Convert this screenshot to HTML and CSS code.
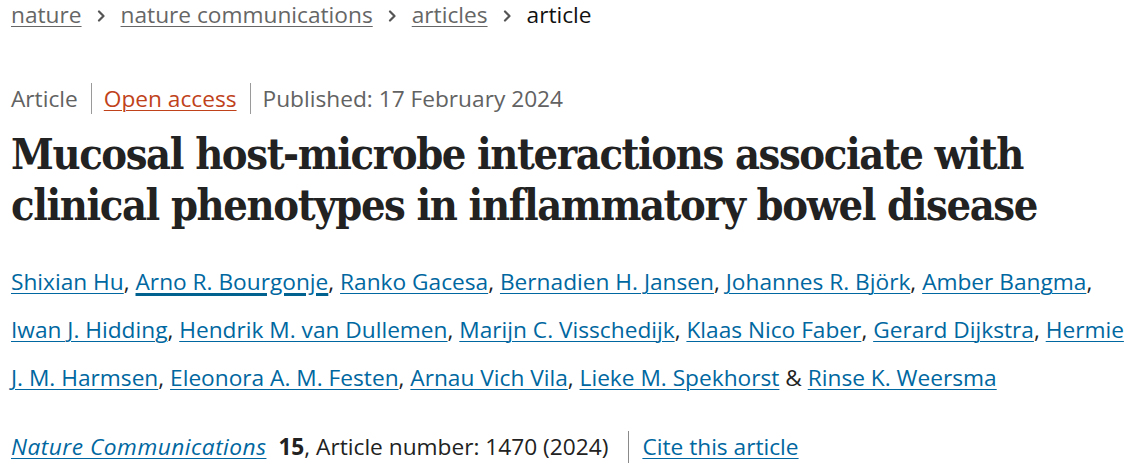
FILE: index.html
```html
<!DOCTYPE html>
<html lang="en">
<head>
<meta charset="utf-8">
<title>Mucosal host-microbe interactions associate with clinical phenotypes in inflammatory bowel disease</title>
<link rel="stylesheet" href="styles.css">
</head>
<body>
<main class="page">
  <nav class="crumbs" aria-label="breadcrumbs">
    <ol class="crumb-list">
      <li class="crumb"><a class="crumb-link" href="#">nature</a><svg class="chev" viewBox="0 0 8 12" width="8" height="12" aria-hidden="true"><path d="M2 1.5 L6.5 6 L2 10.5" fill="none" stroke="currentColor" stroke-width="2.2" stroke-linecap="round" stroke-linejoin="round"/></svg></li>
      <li class="crumb"><a class="crumb-link" href="#">nature communications</a><svg class="chev" viewBox="0 0 8 12" width="8" height="12" aria-hidden="true"><path d="M2 1.5 L6.5 6 L2 10.5" fill="none" stroke="currentColor" stroke-width="2.2" stroke-linecap="round" stroke-linejoin="round"/></svg></li>
      <li class="crumb"><a class="crumb-link" href="#">articles</a><svg class="chev" viewBox="0 0 8 12" width="8" height="12" aria-hidden="true"><path d="M2 1.5 L6.5 6 L2 10.5" fill="none" stroke="currentColor" stroke-width="2.2" stroke-linecap="round" stroke-linejoin="round"/></svg></li>
      <li class="crumb crumb-current">article</li>
    </ol>
  </nav>

  <header class="article-header">
    <ul class="meta">
      <li class="meta-item">Article</li>
      <li class="meta-item"><a class="oa-link" href="#">Open access</a></li>
      <li class="meta-item">Published: <time datetime="2024-02-17">17 February 2024</time></li>
    </ul>

    <h1 class="title">Mucosal host-microbe interactions associate with clinical phenotypes in inflammatory bowel disease</h1>

    <ul class="authors">
      <li class="author"><a href="#">Shixian Hu</a>, </li>
      <li class="author"><a class="is-hover" href="#">Arno R. Bourgonje</a>, </li>
      <li class="author"><a href="#">Ranko Gacesa</a>, </li>
      <li class="author"><a href="#">Bernadien H. Jansen</a>, </li>
      <li class="author"><a href="#">Johannes R. Björk</a>, </li>
      <li class="author"><a href="#">Amber Bangma</a>, </li>
      <li class="author"><a href="#">Iwan J. Hidding</a>, </li>
      <li class="author"><a href="#">Hendrik M. van Dullemen</a>, </li>
      <li class="author"><a href="#">Marijn C. Visschedijk</a>, </li>
      <li class="author"><a href="#">Klaas Nico Faber</a>, </li>
      <li class="author"><a href="#">Gerard Dijkstra</a>, </li>
      <li class="author"><a href="#">Hermie J. M. Harmsen</a>, </li>
      <li class="author"><a href="#">Eleonora A. M. Festen</a>, </li>
      <li class="author"><a href="#">Arnau Vich Vila</a>, </li>
      <li class="author"><a href="#">Lieke M. Spekhorst</a> &amp; </li>
      <li class="author"><a href="#">Rinse K. Weersma</a></li>
    </ul>

    <p class="citation">
      <span class="cite-ref"><a class="journal" href="#">Nature Communications</a> <b class="volume">15</b>, Article number: 1470 (2024)</span>
      <a class="cite-link" href="#">Cite this article</a>
    </p>
  </header>
</main>
</body>
</html>
```
FILE: styles.css
```css
html, body {
  margin: 0;
  padding: 0;
  background: #ffffff;
}

body {
  font-family: "Open Sans", "Noto Sans", "Liberation Sans", sans-serif;
  font-size: 22.7px;
  color: #222222;
}

.page {
  padding: 0 11px 0 11px;
  width: 1119px;
}

a {
  color: #0067a0;
  text-decoration: underline;
  text-underline-offset: 3px;
  text-decoration-thickness: 1px;
}

/* breadcrumbs */
.crumbs {
  height: 30px;
}

.crumb-list {
  list-style: none;
  margin: 0;
  padding: 0;
  display: flex;
  align-items: center;
  height: 30px;
  line-height: 30px;
}

.crumb {
  display: flex;
  align-items: center;
}

.crumb-link {
  color: #666666;
  text-decoration-color: #666666;
}

.chev {
  color: #555555;
  margin: 2px 16px 0 15px;
}

.crumb-current {
  color: #111111;
}

/* meta row */
.meta {
  list-style: none;
  margin: 53px 0 0 0;
  padding: 0;
  display: flex;
  align-items: center;
  color: #626262;
  line-height: 31px;
}

.meta-item + .meta-item {
  border-left: 1px solid #9a9a9a;
  margin-left: 13px;
  padding-left: 12px;
}

.oa-link {
  color: #c0421a;
  text-decoration-color: #c0421a;
}

/* title */
.title {
  margin: 15px 0 0 0;
  font-family: "DejaVu Serif Condensed", "DejaVu Serif", "Liberation Serif", serif;
  font-stretch: condensed;
  font-weight: 700;
  font-size: 43px;
  line-height: 51px;
  letter-spacing: -1.4px;
  color: #222222;
}

/* authors */
.authors {
  list-style: none;
  margin: 27px 0 0 0;
  padding: 0;
  line-height: 48px;
}

.author {
  display: inline;
}

.is-hover {
  text-decoration-thickness: 3px;
  text-decoration-color: #01628f;
}

/* citation */
.citation {
  margin: 29px 0 0 0;
  display: flex;
  align-items: center;
  line-height: 32px;
}

.journal {
  font-style: italic;
  letter-spacing: 0.5px;
  margin-right: 6px;
}

.volume {
  font-weight: 700;
}

.cite-link {
  border-left: 1px solid #8a8a8a;
  margin-left: 20px;
  padding-left: 13px;
}
```
